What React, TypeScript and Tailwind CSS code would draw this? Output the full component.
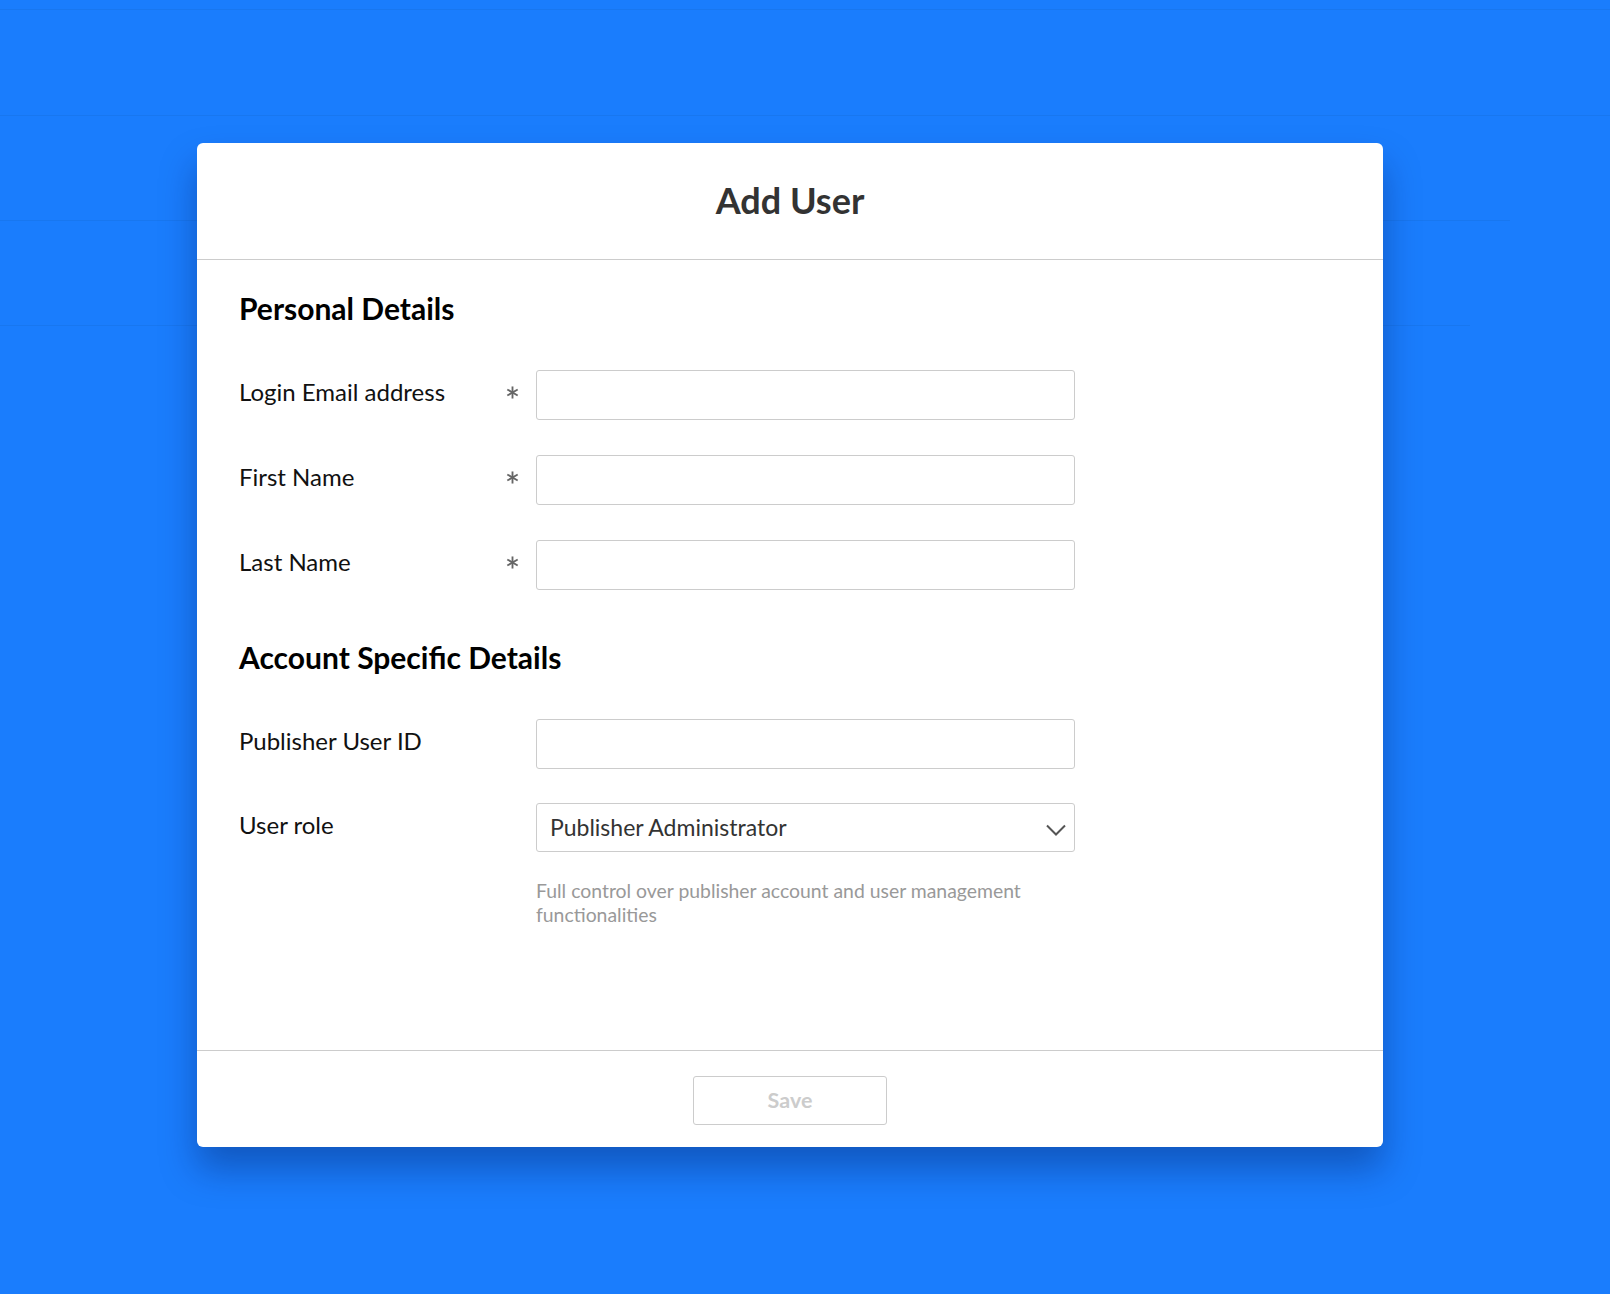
import React from "react";

const Asterisk = () => (
  <svg width="13" height="13" viewBox="0 0 14 14" className="text-[#666]">
    <g stroke="currentColor" strokeWidth="2" strokeLinecap="butt">
      <line x1="7" y1="0.5" x2="7" y2="13.5" />
      <line x1="1.4" y1="3.75" x2="12.6" y2="10.25" />
      <line x1="1.4" y1="10.25" x2="12.6" y2="3.75" />
    </g>
  </svg>
);

const Field = ({
  label,
  required,
  children,
}: {
  label: string;
  required?: boolean;
  children?: React.ReactNode;
}) => (
  <div className="flex items-start">
    <div className="w-[297px] flex items-center justify-between pr-[17px] h-[44px]">
      <span className="text-[24px] text-[#111]">{label}</span>
      {required && <Asterisk />}
    </div>
    <div className="w-[539px]">
      {children ?? (
        <input className="w-full h-[50px] border border-[#cccccc] rounded-[3px] bg-white px-3 text-[22px] outline-none" />
      )}
    </div>
  </div>
);

export default function App() {
  return (
    <div
      className="relative min-h-screen bg-[#1a7dfd] overflow-hidden"
      style={{ fontFamily: "Lato, 'Open Sans', sans-serif" }}
    >
      {/* faint page behind the overlay */}
      <div className="absolute left-0 right-0 top-[9px] h-px bg-[#1877f0]" />
      <div className="absolute left-0 right-0 top-[115px] h-px bg-[#1877f0]" />
      <div className="absolute left-0 w-[1510px] top-[220px] h-px bg-[#1877f0]" />
      <div className="absolute left-0 w-[1470px] top-[325px] h-px bg-[#1877f0]" />

      <div className="relative pt-[143px] pl-[197px] pb-[147px]">
        <div className="w-[1186px] h-[1004px] bg-white rounded-[6px] shadow-[0_22px_36px_rgba(0,20,80,0.35)] flex flex-col">
          <div className="h-[117px] border-b border-[#cccccc] flex items-center justify-center pb-[2px]">
            <h1 className="text-[36px] font-bold text-[#333333]">Add User</h1>
          </div>

          <div className="flex-1 px-[42px] pt-[30px]">
            <h2 className="text-[30px] leading-[36px] font-bold text-black">
              Personal Details
            </h2>
            <div className="mt-[44px] flex flex-col gap-[35px]">
              <Field label="Login Email address" required />
              <Field label="First Name" required />
              <Field label="Last Name" required />
            </div>

            <h2 className="mt-[49px] text-[30px] leading-[36px] font-bold text-black">
              Account Specific Details
            </h2>
            <div className="mt-[44px] flex flex-col gap-[34px]">
              <Field label="Publisher User ID" />
              <Field label="User role">
                <div className="relative h-[49px] border border-[#cccccc] rounded-[3px] bg-white flex items-center pl-[13px]">
                  <span className="text-[23px] text-[#333333]">
                    Publisher Administrator
                  </span>
                  <svg
                    width="20"
                    height="12"
                    viewBox="0 0 20 12"
                    className="absolute right-[8px] top-[20px]"
                  >
                    <path
                      d="M1 1.5 L10 10.5 L19 1.5"
                      fill="none"
                      stroke="#555555"
                      strokeWidth="2"
                    />
                  </svg>
                </div>
                <p className="mt-[27px] text-[19.4px] leading-[24px] text-[#999999] pr-[20px]">
                  Full control over publisher account and user management
                  functionalities
                </p>
              </Field>
            </div>
          </div>

          <div className="h-[97px] border-t border-[#cccccc] flex justify-center pt-[25px]">
            <button className="w-[194px] h-[49px] border border-[#cccccc] rounded-[3px] bg-white text-[21.5px] font-bold text-[#cccccc]">
              Save
            </button>
          </div>
        </div>
      </div>
    </div>
  );
}
